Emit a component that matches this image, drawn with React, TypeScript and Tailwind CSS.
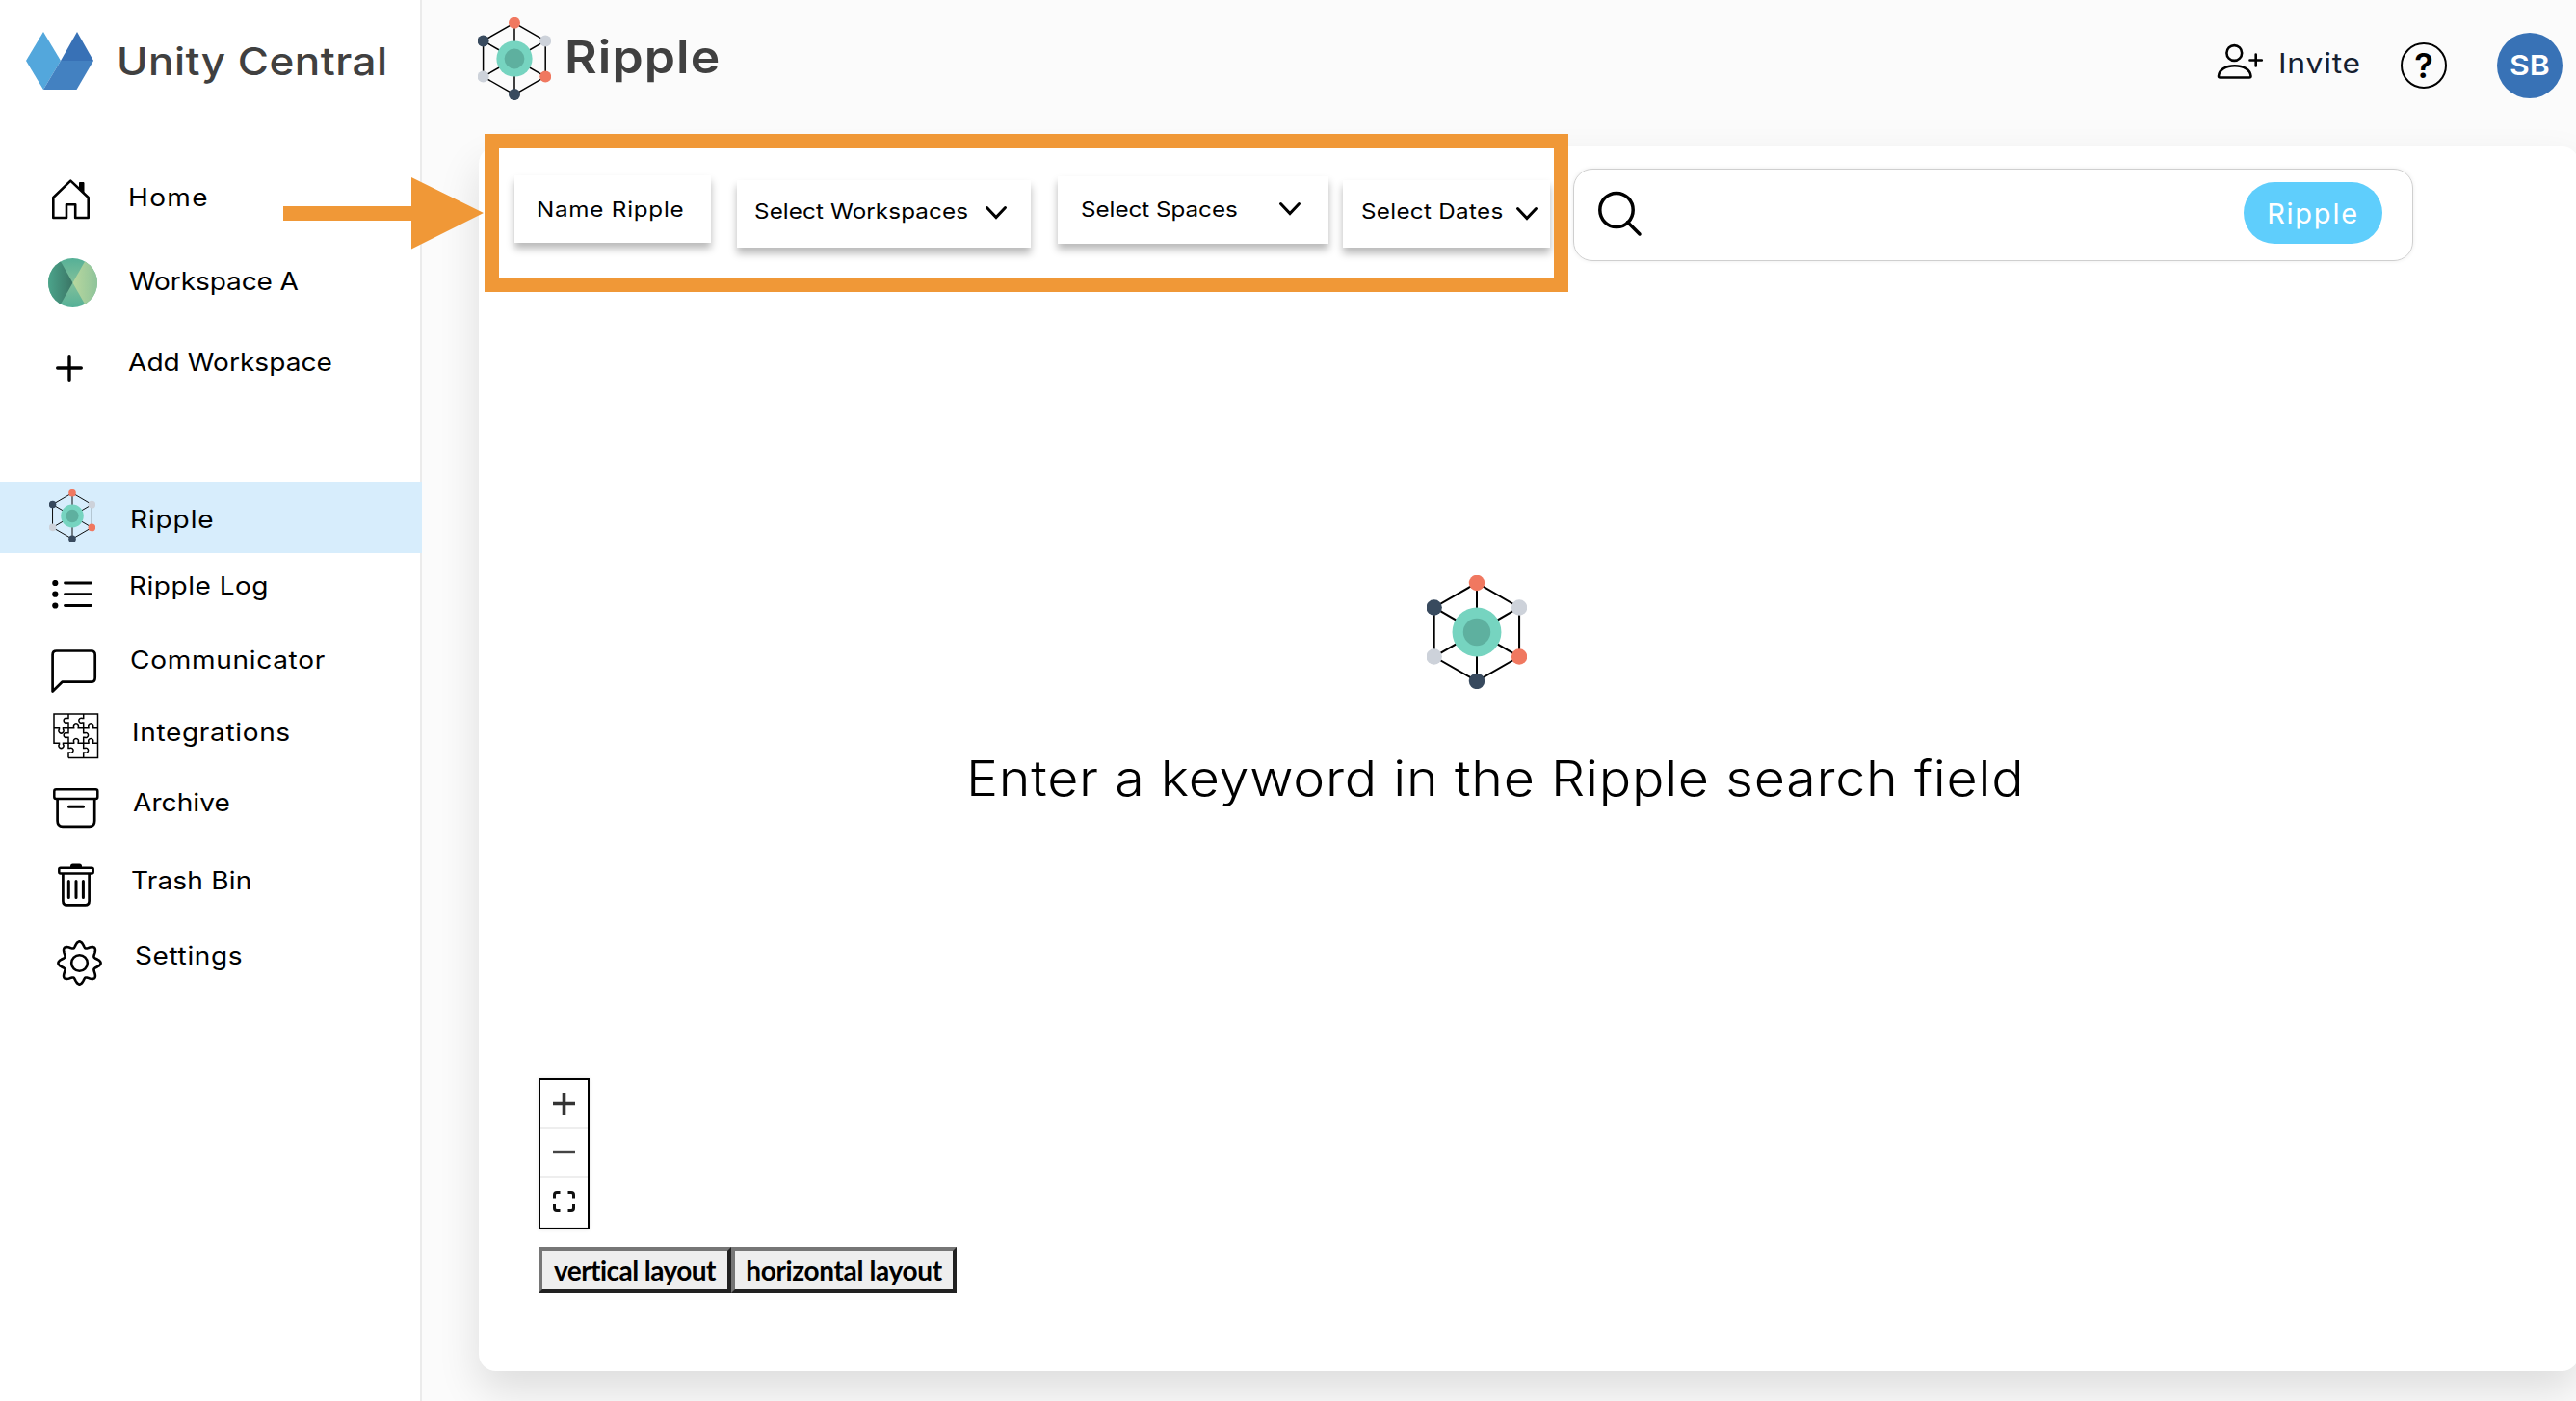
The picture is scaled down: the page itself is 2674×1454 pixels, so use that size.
import type { ReactNode } from "react";

const RippleMark = ({ className }: { className: string }) => {
  const nodes = [
    { x: 38, y: 5.8, fill: "#f07860" },
    { x: 70.2, y: 24.4, fill: "#cdd2da" },
    { x: 70.2, y: 61.6, fill: "#f07860" },
    { x: 38, y: 80.1, fill: "#384a5e" },
    { x: 5.6, y: 61.6, fill: "#cdd2da" },
    { x: 5.6, y: 24.4, fill: "#384a5e" },
  ];
  return (
    <svg
      viewBox="0 0 76 86"
      preserveAspectRatio="none"
      className={className}
      fill="none"
    >
      <g stroke="#000" strokeWidth="1.5">
        <polygon points={nodes.map((n) => `${n.x},${n.y}`).join(" ")} />
        {nodes.map((n, i) => (
          <line key={i} x1="38" y1="43" x2={n.x} y2={n.y} />
        ))}
      </g>
      {nodes.map((n, i) => (
        <circle key={i} cx={n.x} cy={n.y} r="6" fill={n.fill} />
      ))}
      <circle cx="38" cy="43" r="18.6" fill="#76d4c0" />
      <circle cx="38" cy="43" r="10.4" fill="#5eb09f" />
    </svg>
  );
};

const BrandLogo = () => (
  <svg width="70" height="60" viewBox="0 0 70 60">
    <path d="M18 0L36 30L18 60L0 30Z" fill="#53a7dc" />
    <path d="M53 0L70 30H36Z" fill="#3871b6" />
    <path d="M36 30H70L52.500 60H18Z" fill="#4381c1" />
  </svg>
);

const HomeIcon = () => (
  <svg width="40" height="42" viewBox="0 0 40 42" fill="none" stroke="#000">
    <path
      d="M19.300 1.600L1.300 19V40H15V26.300H24.200V40H37.700V19Z"
      strokeWidth="2.600"
      strokeLinejoin="round"
    />
    <path d="M28.500 3.500H33V14.500L28.500 10Z" fill="#000" />
  </svg>
);

const WorkspaceIcon = () => (
  <svg width="51" height="51" viewBox="0 0 51 51">
    <defs>
      <clipPath id="ws-clip">
        <circle cx="25.500" cy="25.500" r="25.500" />
      </clipPath>
      <linearGradient id="ws-mid" x1="0" y1="0" x2="0" y2="1">
        <stop stopColor="#55b097" />
        <stop offset="0.5" stopColor="#82c09a" />
        <stop offset="1" stopColor="#55b097" />
      </linearGradient>
      <linearGradient id="ws-left">
        <stop stopColor="#4ca48b" />
        <stop offset="1" stopColor="#3a7565" />
      </linearGradient>
      <linearGradient id="ws-right">
        <stop stopColor="#b8d79e" />
        <stop offset="1" stopColor="#8fc49a" />
      </linearGradient>
    </defs>
    <g clipPath="url(#ws-clip)">
      <rect width="51" height="51" fill="url(#ws-mid)" />
      <path d="M0 0H11L25.500 25.500L11 51H0Z" fill="url(#ws-left)" />
      <path d="M51 0H40L25.500 25.500L40 51H51Z" fill="url(#ws-right)" />
    </g>
  </svg>
);

const AddIcon = () => (
  <svg width="28" height="28" viewBox="0 0 28 28" stroke="#000">
    <path
      d="M14 1.700V26.300M1.700 14H26.300"
      strokeWidth="3.400"
      strokeLinecap="round"
    />
  </svg>
);

const ListIcon = () => (
  <svg width="43" height="30" viewBox="0 0 43 30">
    {[3, 14.7, 26.5].map((y) => (
      <g key={y}>
        <circle cx="3.300" cy={y} r="3.100" />
        <path
          d={`M13.500 ${y}H40.500`}
          stroke="#000"
          strokeWidth="2.800"
          strokeLinecap="round"
        />
      </g>
    ))}
  </svg>
);

const ChatIcon = () => (
  <svg width="48" height="46" viewBox="0 0 48 46" fill="none" stroke="#000">
    <path
      d="M1.600 43.500V5.500Q1.600 1.500 5.600 1.500H41.500Q45.700 1.500 45.700 5.700V29.500Q45.700 33.700 41.500 33.700H11.500Z"
      strokeWidth="2.700"
      strokeLinejoin="round"
    />
  </svg>
);

const PuzzleIcon = () => (
  <svg width="48" height="48" viewBox="0 0 48 48" fill="none" stroke="#000">
    <path
      strokeWidth="1.500"
      d="M16 46.500H46.500V1H1V31.300H6.500V32.500A2.500 2.500 0 1 0 10.500 32.500V31.300H16V36.500H17.500A2.500 2.500 0 1 1 17.500 41H16V46.500
      M16 1V5.500H14.700A2.500 2.500 0 1 0 14.700 10H16V20.700H14.700A2.500 2.500 0 1 0 14.700 25.200H16V31.300
      M31.700 1V5.500H30.400A2.500 2.500 0 1 0 30.400 10H31.700V20.700H33A2.500 2.500 0 1 1 33 25.200H31.700V36.500H33A2.500 2.500 0 1 1 33 41H31.700V46.500
      M1 15.700H6.500V17A2.500 2.500 0 1 0 10.500 17V15.700H21.700V14.400A2.500 2.500 0 1 1 26.200 14.400V15.700H37V14.400A2.500 2.500 0 1 1 41.500 14.400V15.700H46.500
      M16 31.300H21.700V30A2.500 2.500 0 1 1 26.200 30V31.300H37V30A2.500 2.500 0 1 1 41.500 30V31.300H46.500"
    />
  </svg>
);

const ArchiveIcon = () => (
  <svg width="48" height="42" viewBox="0 0 48 42" fill="none" stroke="#000">
    <rect
      x="1.300"
      y="1.300"
      width="45"
      height="9.800"
      rx="2"
      strokeWidth="2.500"
    />
    <path
      d="M4.600 11V34Q4.600 39.800 10 39.800H38Q43.200 39.800 43.200 34V11"
      strokeWidth="2.700"
    />
    <path d="M16.500 19.300H31.500" strokeWidth="3" strokeLinecap="round" />
  </svg>
);

const TrashIcon = () => (
  <svg width="38" height="45" viewBox="0 0 38 45" fill="none" stroke="#000">
    <path
      d="M13 5V3Q13 .5 15.500 .5H22.500Q25 .5 25 3V5Z"
      fill="#000"
      stroke="none"
    />
    <rect
      x="1.300"
      y="4.800"
      width="35.400"
      height="5.800"
      rx="1.500"
      strokeWidth="2.500"
    />
    <path
      d="M5.400 11V39Q5.400 43.400 9.500 43.400H28.500Q32.600 43.400 32.600 39V11"
      strokeWidth="2.700"
    />
    <path
      d="M11.300 18.500V35.500M19 18.500V35.500M26.400 18.500V35.500"
      strokeWidth="3"
      strokeLinecap="round"
    />
  </svg>
);

// eight rounded teeth
const gearPoints = Array.from({ length: 160 }, (_, i) => {
  const a = (i / 160) * Math.PI * 2;
  const r = 19.2 + 2.9 * Math.cos(8 * a);
  return `${(23.5 + r * Math.cos(a)).toFixed(2)},${(23.5 + r * Math.sin(a)).toFixed(2)}`;
}).join(" ");

const GearIcon = () => (
  <svg width="47" height="47" viewBox="0 0 47 47" fill="none" stroke="#000">
    <polygon points={gearPoints} strokeWidth="2.600" strokeLinejoin="round" />
    <circle cx="23.500" cy="23.500" r="8.300" strokeWidth="2.600" />
  </svg>
);

const Chevron = ({ className }: { className: string }) => (
  <svg
    width="24"
    height="16"
    viewBox="0 0 24 16"
    fill="none"
    stroke="#000"
    className={className}
  >
    <path
      d="M2.500 2.500L12 12.500L21.500 2.500"
      strokeWidth="3"
      strokeLinecap="round"
    />
  </svg>
);

type NavItem = {
  label: string;
  icon: ReactNode;
  row: string;
  iconBox: string;
  text: string;
};

const navItems: NavItem[] = [
  {
    label: "Home",
    icon: <HomeIcon />,
    row: "h-[85px]",
    iconBox: "w-[133px] pl-[54px] pt-[16px]",
    text: "pt-[19px] tracking-[1.2px]",
  },
  {
    label: "Workspace A",
    icon: <WorkspaceIcon />,
    row: "h-[90px]",
    iconBox: "w-[134px] pl-[50px] pt-[13px]",
    text: "pt-[21px] tracking-[-0.1px]",
  },
  {
    label: "Add Workspace",
    icon: <AddIcon />,
    row: "h-[155px]",
    iconBox: "w-[133px] pl-[58px] pt-[23px]",
    text: "pt-[15px] tracking-[0.04px]",
  },
  {
    label: "Ripple",
    icon: <RippleMark className="h-[55px] w-[48px]" />,
    row: "h-[74px] bg-[#d7edfc]",
    iconBox: "w-[135px] pl-[51px] pt-[8px]",
    text: "pt-[23px] tracking-[0.78px]",
  },
  {
    label: "Ripple Log",
    icon: <ListIcon />,
    row: "h-[86px]",
    iconBox: "w-[134px] pl-[54px] pt-[28px]",
    text: "pt-[18px] tracking-[0.45px]",
  },
  {
    label: "Communicator",
    icon: <ChatIcon />,
    row: "h-[75px]",
    iconBox: "w-[135px] pl-[53px] pt-[14px]",
    text: "pt-[9px] tracking-[0.62px]",
  },
  {
    label: "Integrations",
    icon: <PuzzleIcon />,
    row: "h-[75px]",
    iconBox: "w-[137px] pl-[55px] pt-[5px]",
    text: "pt-[9px] tracking-[0.59px]",
  },
  {
    label: "Archive",
    icon: <ArchiveIcon />,
    row: "h-[80px]",
    iconBox: "w-[138px] pl-[55px] pt-[8px]",
    text: "pt-[7px] tracking-[0.05px]",
  },
  {
    label: "Trash Bin",
    icon: <TrashIcon />,
    row: "h-[75px]",
    iconBox: "w-[136px] pl-[60px] pt-[6px]",
    text: "pt-[8px] tracking-[0.16px]",
  },
  {
    label: "Settings",
    icon: <GearIcon />,
    row: "h-[75px]",
    iconBox: "w-[140px] pl-[59px] pt-[11px]",
    text: "pt-[11px] tracking-[0.54px]",
  },
];

const Sidebar = () => (
  <aside className="flex w-[438px] shrink-0 flex-col bg-white">
    <div className="flex h-[170px] items-start border-r-2 border-[#ebebeb] pl-[27px] pt-[33px]">
      <BrandLogo />
      <h2 className="ml-[24px] mt-[7px] origin-left scale-x-110 whitespace-nowrap text-[40px] font-medium leading-[48px] tracking-[0.42px] text-[#404040]">
        Unity Central
      </h2>
    </div>
    <nav>
      {navItems.map((item) => (
        <a
          key={item.label}
          className={`flex items-start border-r-2 ${
            item.label === "Ripple" ? "border-[#d7edfc]" : "border-[#ebebeb]"
          } ${item.row}`}
        >
          <span className={`block shrink-0 ${item.iconBox}`}>{item.icon}</span>
          <span
            className={`block origin-left scale-x-110 whitespace-nowrap text-[25.5px] leading-[32px] text-black ${item.text}`}
          >
            {item.label}
          </span>
        </a>
      ))}
    </nav>
    <div className="flex-1 border-r-2 border-[#ebebeb]" />
  </aside>
);

const Header = () => (
  <header className="flex h-[152px] items-start pl-[58px]">
    <RippleMark className="mt-[18px] h-[86px] w-[76px]" />
    <h1 className="ml-[14px] mt-[31px] origin-left scale-x-110 text-[47px] font-semibold leading-[56px] tracking-[0.98px] text-[#404040]">
      Ripple
    </h1>
    <div className="ml-auto flex items-start pr-[14px]">
      <svg
        width="50"
        height="38"
        viewBox="0 0 50 38"
        fill="none"
        stroke="#000"
        strokeWidth="2.600"
        className="mt-[45px]"
      >
        <circle cx="18.300" cy="10" r="7.900" />
        <path d="M3.500 35.500H34Q35.500 35.500 35.500 34C35 27 28 23.300 18.700 23.300C9.500 23.300 2.500 27 2 34Q2 35.500 3.500 35.500Z" />
        <path d="M40.700 11.500V23.500M34.500 17.500H46.800" strokeLinecap="round" />
      </svg>
      <span className="ml-[14px] mt-[48px] w-[127px] origin-left scale-x-110 text-[29px] leading-[36px] tracking-[0.7px] text-[#16202f]">
        Invite
      </span>
      <span className="mt-[44px] flex size-[48px] items-center justify-center rounded-full border-[2.5px] border-black text-[36px] font-semibold leading-none text-black">
        ?
      </span>
      <span className="ml-[52px] mt-[34px] flex size-[68px] items-center justify-center rounded-full bg-[#3872b6] text-[29px] font-semibold text-white">
        <span className="scale-x-110">SB</span>
      </span>
    </div>
  </header>
);

const filterBase =
  "flex h-[70px] shrink-0 items-start bg-white shadow-[0_6px_8px_rgba(0,0,0,0.28)] text-[22px] font-normal leading-[28px] text-black";

const Toolbar = () => (
  <div className="flex items-start pl-[37px]">
    <button className={`${filterBase} mt-[30px] w-[204px] pl-[23px] pt-[21px]`}>
      <span className="origin-left scale-x-110 whitespace-nowrap tracking-[0.7px]">
        Name Ripple
      </span>
    </button>
    <button
      className={`${filterBase} ml-[27px] mt-[35px] w-[305px] justify-between pl-[18px] pr-[24px] pt-[18px]`}
    >
      <span className="origin-left scale-x-110 whitespace-nowrap tracking-[0.1px]">
        Select Workspaces
      </span>
      <Chevron className="mt-[8px]" />
    </button>
    <button
      className={`${filterBase} ml-[28px] mt-[31px] w-[281px] justify-between pl-[24px] pr-[28px] pt-[20px]`}
    >
      <span className="origin-left scale-x-110 whitespace-nowrap tracking-[-0.02px]">
        Select Spaces
      </span>
      <Chevron className="mt-[6px]" />
    </button>
    <button
      className={`${filterBase} ml-[15px] mt-[35px] w-[215px] justify-between pl-[19px] pr-[12px] pt-[18px]`}
    >
      <span className="origin-left scale-x-110 whitespace-nowrap tracking-[0.28px]">
        Select Dates
      </span>
      <Chevron className="mt-[9px]" />
    </button>
    <div className="ml-[24px] mt-[23px] flex h-[96px] w-[872px] items-start rounded-[20px] border border-[#cfcfcf] pl-[24px] pr-[31px] pt-[13px] shadow-[0_0_4px_rgba(0,0,0,0.08)]">
      <svg
        width="48"
        height="50"
        viewBox="0 0 48 50"
        fill="none"
        stroke="#000"
        strokeWidth="3.500"
        className="mt-[9px]"
      >
        <ellipse cx="20" cy="20" rx="17.200" ry="17.600" />
        <path d="M31.500 32.500L44 45" strokeLinecap="round" />
      </svg>
      <button className="ml-auto flex h-[64px] w-[144px] items-center justify-center rounded-full bg-[#5fcefc] pt-[2px] text-[29px] tracking-[1.76px] text-white">
        Ripple
      </button>
    </div>
  </div>
);

const ZoomControls = () => (
  <div className="flex h-[157px] w-[53px] flex-col border-2 border-black bg-white shadow-[0_0_4px_rgba(0,0,0,0.1)]">
    <button className="flex h-[51px] items-center justify-center border-b-2 border-[#eee]">
      <svg width="23" height="23" viewBox="0 0 23 23" stroke="#333">
        <path d="M11.500 0V23M0 11.500H23" strokeWidth="3.600" />
      </svg>
    </button>
    <button className="flex h-[51px] items-center justify-center border-b-2 border-[#eee] pb-[2px]">
      <svg width="23" height="4" viewBox="0 0 23 4" stroke="#444">
        <path d="M0 2H23" strokeWidth="2.400" />
      </svg>
    </button>
    <button className="flex h-[51px] items-center justify-center border-b border-[#eee] pb-[3px]">
      <svg width="23" height="22" viewBox="0 0 23 22" fill="none" stroke="#111">
        <path
          d="M1.500 7.500V4Q1.500 1.500 4 1.500H7.500M15.500 1.500H19Q21.500 1.500 21.500 4V7.500M21.500 14V18Q21.500 20.500 19 20.500H15.500M7.500 20.500H4Q1.500 20.500 1.500 18V14"
          strokeWidth="3"
        />
      </svg>
    </button>
  </div>
);

const layoutButton =
  "h-[48px] border-4 border-b-[#212121] border-l-[#767676] border-r-[#212121] border-t-[#767676] bg-[#eee] pb-[3px] pt-[3px] font-['Lato',sans-serif] text-[28px] font-bold leading-[34px] text-black whitespace-nowrap";

export default function App() {
  return (
    <div className="relative flex h-[1454px] w-[2674px] overflow-hidden bg-[#fbfbfb] font-['Inter',sans-serif]">
      <Sidebar />
      <main className="flex min-w-0 flex-1 flex-col">
        <Header />
        <section className="ml-[59px] flex h-[1271px] w-[2180px] flex-col rounded-[18px] bg-white shadow-[0_20px_44px_rgba(0,0,0,0.12)]">
          <Toolbar />
          <div className="flex h-[848px] flex-col items-start pt-[326px]">
            <RippleMark className="ml-[984px] h-[118px] w-[104px]" />
            <p className="ml-[506px] mt-[63px] origin-left scale-x-110 whitespace-nowrap text-[50.5px] font-light leading-[60px] tracking-[0.69px] text-black">
              Enter a keyword in the Ripple search field
            </p>
          </div>
          <div className="ml-[62px] flex flex-col items-start">
            <ZoomControls />
            <div className="mt-[18px] flex">
              <button
                className={`${layoutButton} w-[200px] tracking-[-0.54px]`}
              >
                vertical layout
              </button>
              <button
                className={`${layoutButton} w-[234px] tracking-[-0.35px]`}
              >
                horizontal layout
              </button>
            </div>
          </div>
        </section>
      </main>

      {/* callout over the filter row */}
      <div className="pointer-events-none absolute left-[503px] top-[139px] h-[164px] w-[1125px] border-[15px] border-[#f09837]" />
      <svg
        width="208"
        height="75"
        viewBox="0 0 208 75"
        className="pointer-events-none absolute left-[294px] top-[184px]"
      >
        <path d="M0 30H133V0L208 37L133 74.500V45H0Z" fill="#f09837" />
      </svg>
    </div>
  );
}
